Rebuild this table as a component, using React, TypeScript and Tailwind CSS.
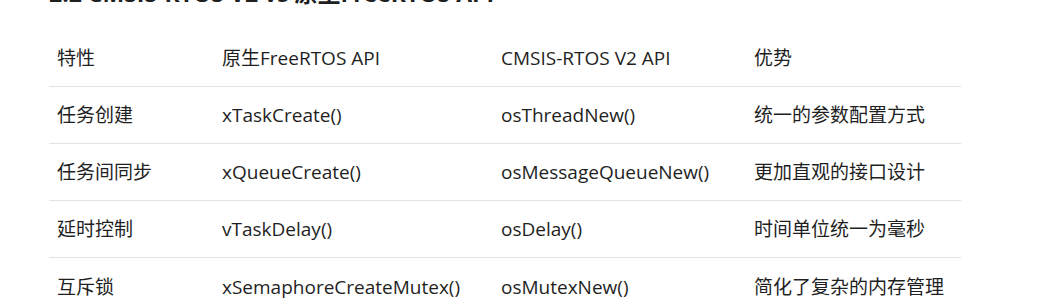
import React from 'react';

const rows = [
  ['任务创建', 'xTaskCreate()', 'osThreadNew()', '统一的参数配置方式'],
  ['任务间同步', 'xQueueCreate()', 'osMessageQueueNew()', '更加直观的接口设计'],
  ['延时控制', 'vTaskDelay()', 'osDelay()', '时间单位统一为毫秒'],
  ['互斥锁', 'xSemaphoreCreateMutex()', 'osMutexNew()', '简化了复杂的内存管理'],
];

const font = { fontFamily: '"Open Sans", "Noto Sans CJK SC", sans-serif' };

function Row({ cells, last }: { cells: string[]; last?: boolean }) {
  return (
    <div
      className={`grid grid-cols-[165px_279px_253px_215px] h-[57px] items-center text-[19px] text-[#1f1f1f] ${
        last ? '' : 'border-b border-[#e2e2e2]'
      }`}
    >
      {cells.map((c, i) => (
        <div key={i} className="pl-[8px] pt-px whitespace-nowrap">
          {c}
        </div>
      ))}
    </div>
  );
}

export default function App() {
  return (
    <div className="w-[1039px] h-[305px] overflow-hidden bg-white" style={font}>
      <div className="pl-[49px] pt-px">
        <h2 className="-mt-[23px] mb-[22px] h-[30px] text-[23px] font-bold leading-[30px] text-[#1f1f1f] whitespace-nowrap">
          2.2 CMSIS-RTOS V2 vs 原生FreeRTOS API
        </h2>
        <div className="w-[912px]">
          <Row cells={['特性', '原生FreeRTOS API', 'CMSIS-RTOS V2 API', '优势']} />
          {rows.map((r, i) => (
            <Row key={i} cells={r} last={i === rows.length - 1} />
          ))}
        </div>
      </div>
    </div>
  );
}
